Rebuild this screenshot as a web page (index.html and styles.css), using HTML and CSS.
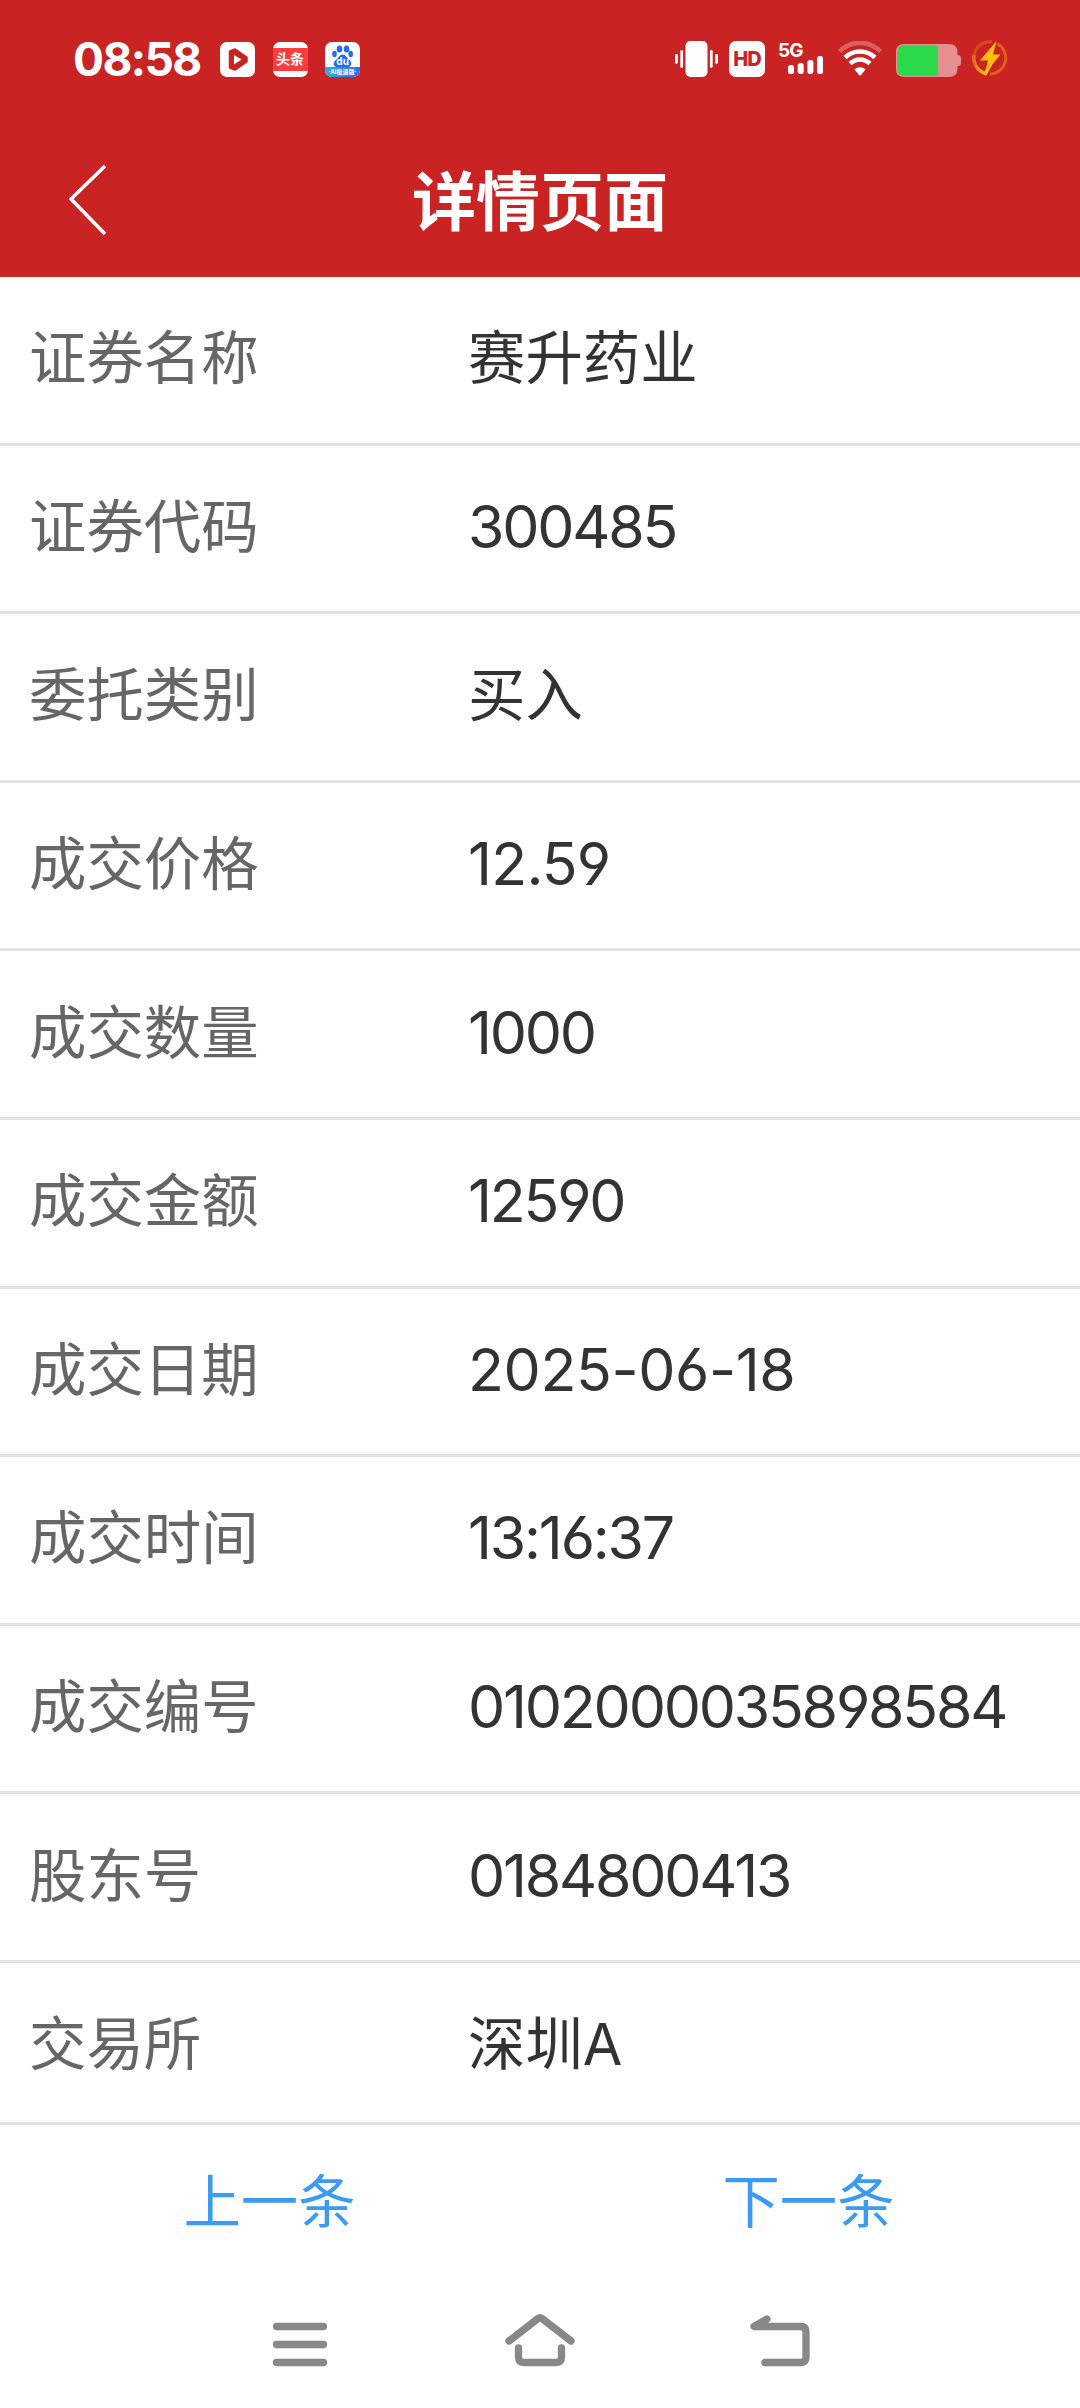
FILE: index.html
```html
<!DOCTYPE html>
<html lang="zh-CN">
<head>
  <meta charset="utf-8" />
  <meta name="viewport" content="width=device-width, initial-scale=1.0" />

  <title>详情页面</title>

  <link rel="stylesheet" href="styles.css">
</head>
<body>
  <header class="header">
    <div class="status-bar">
      <span class="clock">08:58</span>

      <div class="notifications">
        <svg class="status-icon" viewBox="0 0 35 35">
          <rect width="35" height="35" rx="7" fill="#fff" />
          <path d="M10 9.500 15 7.500 26.500 15.500V19.500L15 27.500 10 25.500Z" fill="#c92323" stroke="#c92323" stroke-width="2.500" stroke-linejoin="round" />
          <path d="M14 13 21.500 17.500 14 22.500Z" fill="#fff" />
        </svg>

        <div class="app-icon toutiao"><span class="toutiao-name">头条</span></div>

        <div class="app-icon baidu">
          <svg class="baidu-paw" viewBox="0 0 35 25">
            <g fill="#256df0">
              <ellipse cx="14.500" cy="7" rx="2.800" ry="3.600" />
              <ellipse cx="21.500" cy="7" rx="2.800" ry="3.600" />
              <ellipse cx="9.500" cy="12" rx="2.300" ry="3.200" />
              <ellipse cx="25.700" cy="12" rx="2.300" ry="3.200" />
              <path d="M17.500 12.500C20.500 12.500 22 16 25 18.300 28 22 25.500 26 21 25H14C9 26 7 22 10.500 18.300 13.500 16 14.500 12.500 17.500 12.500Z" />
            </g>
            <text class="baidu-du" x="17.600" y="22.700">du</text>
          </svg>
          <span class="baidu-label">·AI极速版·</span>
        </div>
      </div>

      <div class="indicators">
        <svg class="vibrate" viewBox="0 0 43 36">
          <g fill="#fff">
            <rect x="10.500" width="22" height="36" rx="5" />
            <rect x="5.300" y="9" width="2.800" height="18" rx="1.400" />
            <rect x="0" y="13" width="2.800" height="10" rx="1.400" />
            <rect x="34.900" y="9" width="2.800" height="18" rx="1.400" />
            <rect x="40.200" y="13" width="2.800" height="10" rx="1.400" />
          </g>
        </svg>

        <span class="hd">HD</span>

        <div class="signal">
          <span class="signal-type">5G</span>
          <svg class="signal-bars" viewBox="0 0 35 18">
            <g fill="#fff">
              <rect y="9" width="6" height="9" rx="2.500" />
              <rect x="9.700" y="7" width="6" height="11" rx="2.500" />
              <rect x="19.400" y="4" width="6" height="14" rx="2.500" />
              <rect x="29" width="6" height="18" rx="2.500" />
            </g>
          </svg>
        </div>

        <svg class="wifi" viewBox="0 0 44 36">
          <g fill="none" stroke="#fff" stroke-width="4.500">
            <path d="M1.500 10.500C13-1 31-1 42.500 10.500" opacity=".28" />
            <path d="M7 16.500C15.500 8.500 28.500 8.500 37 16.500" />
            <path d="M12 22.500C18 17 26 17 32 22.500" />
          </g>
          <path d="M16.500 28.500C19.500 25.500 24.500 25.500 27.500 28.500L23 34Q22 35 21 34Z" fill="#fff" />
        </svg>

        <svg class="battery" viewBox="0 0 65 33">
          <path d="M8 0H53Q61 0 61.500 8V11Q65 11 65 14V19Q65 22 61.500 22V25Q61 33 53 33H8Q0 33 0 25V8Q0 0 8 0Z" fill="#e68f8f" />
          <path d="M8 1.300H42V31.700H8Q1.300 31.700 1.300 25V8Q1.300 1.300 8 1.300Z" fill="#2bd94a" />
        </svg>

        <svg class="charge" viewBox="0 0 36 36">
          <defs>
            <linearGradient id="ring" x1="0" y1="0" x2="1" y2="0">
              <stop offset="0" stop-color="#e56b16" />
              <stop offset=".6" stop-color="#fdb913" />
            </linearGradient>
          </defs>
          <path d="M20 1.800A16.300 16.300 0 0 0 2 15" fill="none" stroke="#d9481c" stroke-width="3" />
          <path d="M2 15A16.300 16.300 0 0 0 13.500 33.500L19 23.500" fill="none" stroke="url(#ring)" stroke-width="3.500" />
          <path d="M25 3.500A16.300 16.300 0 0 1 18 34.200" fill="none" stroke="#df6019" stroke-width="3" />
          <path d="M24.500 1 8 20.500H16L12.500 34 28.500 14.500H21Z" fill="#ffbd12" />
        </svg>
      </div>
    </div>

    <div class="title-bar">
      <svg class="back" viewBox="0 0 38 72">
        <path d="M36 2 2 35 36 70" fill="none" stroke="#fff" stroke-width="3.600" />
      </svg>
      <h1 class="title">详情页面</h1>
    </div>
  </header>

  <main class="details">
    <div class="row"><span class="label">证券名称</span><span class="value">赛升药业</span></div>
    <div class="row"><span class="label">证券代码</span><span class="value number">300485</span></div>
    <div class="row"><span class="label">委托类别</span><span class="value">买入</span></div>
    <div class="row"><span class="label">成交价格</span><span class="value number price">12.59</span></div>
    <div class="row"><span class="label">成交数量</span><span class="value number">1000</span></div>
    <div class="row"><span class="label">成交金额</span><span class="value number">12590</span></div>
    <div class="row"><span class="label">成交日期</span><span class="value number date">2025-06-18</span></div>
    <div class="row"><span class="label">成交时间</span><span class="value number">13:16:37</span></div>
    <div class="row"><span class="label">成交编号</span><span class="value number">0102000035898584</span></div>
    <div class="row"><span class="label">股东号</span><span class="value number">0184800413</span></div>
    <div class="row"><span class="label">交易所</span><span class="value">深圳A</span></div>
  </main>

  <footer class="pager">
    <a class="pager-link">上一条</a>
    <a class="pager-link">下一条</a>
  </footer>

  <nav class="system-nav">
    <svg class="nav-icon" viewBox="0 0 72 54">
      <path d="M12.500 12.500H59.500M12.500 30.500H59.500M12.500 48.500H59.500" />
    </svg>
    <svg class="nav-icon" viewBox="0 0 72 54">
      <path d="M5 27 34 4.500Q36 3 38 4.500L67 27M14.500 34V43Q14.500 48.500 20 48.500H52Q57.500 48.500 57.500 43V34" />
    </svg>
    <svg class="nav-icon" viewBox="0 0 72 54">
      <path d="M23 5 10 12.500H56.500Q62 12.500 62 18V43Q62 48.500 56.500 48.500H21" />
    </svg>
  </nav>
</body>
</html>
```
FILE: styles.css
```css
*, *::before, *::after {
  box-sizing: border-box;
}

body {
  margin: 0;
  height: 2408px;
  display: flex;
  flex-direction: column;
  background: #fefefe;
  font-family: "Inter", "Noto Sans CJK SC", sans-serif;
  overflow: hidden;
}

svg {
  display: block;
  flex-shrink: 0;
}

.header {
  height: 277px;
  background-color: #c92323;
  color: white;
}

.status-bar {
  display: flex;
  align-items: center;
  height: 118px;
  padding: 0 72px 0 73px;
}

.clock {
  width: 147px;
  font-size: 46px;
  font-weight: 700;
  letter-spacing: -1.6px;
  white-space: nowrap;
}

.notifications {
  display: flex;
  gap: 17.5px;
}

.status-icon, .app-icon {
  width: 35px;
  height: 35px;
}

.app-icon {
  border-radius: 7px;
  overflow: hidden;
  background-color: white;
}

.toutiao {
  padding: 6px 0;
}

.toutiao-name {
  display: block;
  height: 23px;
  line-height: 22px;
  background-color: #fb3d3d;
  font-size: 14px;
  font-weight: 700;
  text-align: center;
}

.baidu-paw {
  width: 35px;
  height: 25px;
}

.baidu-du {
  font-size: 10px;
  font-weight: 700;
  text-anchor: middle;
  fill: white;
}

.baidu-label {
  display: block;
  height: 10px;
  line-height: 9px;
  background: linear-gradient(90deg, #28aeea, #2f6df0);
  font-size: 6px;
  font-weight: 700;
  text-align: center;
  white-space: nowrap;
}

.indicators {
  display: flex;
  align-items: center;
  margin-left: auto;
}

.vibrate {
  width: 43px;
  height: 36px;
}

.hd {
  width: 36px;
  height: 36px;
  margin-left: 11px;
  border-radius: 7px;
  background-color: white;
  color: #c92323;
  font-size: 20px;
  font-weight: 800;
  letter-spacing: -1px;
  line-height: 36px;
  text-align: center;
}

.signal {
  width: 46px;
  height: 32px;
  margin-left: 13px;
}

.signal-type {
  display: block;
  height: 13px;
  font-size: 19px;
  font-weight: 700;
  letter-spacing: -1px;
  line-height: 15px;
}

.signal-bars {
  width: 35px;
  height: 18px;
  margin-left: 10px;
}

.wifi {
  width: 44px;
  height: 36px;
  margin-left: 14px;
}

.battery {
  width: 65px;
  height: 33px;
  margin: 2px 0 0 14px;
}

.charge {
  width: 36px;
  height: 36px;
  margin: -2px 0 0 11px;
}

.title-bar {
  display: grid;
  grid-template-columns: 107px 1fr 107px;
  align-items: center;
  height: 164px;
}

.back {
  width: 38px;
  height: 72px;
  margin-left: 69px;
}

.title {
  margin: 3px 0 0;
  font-size: 64px;
  font-weight: 700;
  line-height: 90px;
  text-align: center;
}

.details {
  height: 1845px;
}

.row {
  display: grid;
  grid-template-columns: 439px 1fr;
  align-items: center;
  height: 168.6px;
  padding: 0 0 3px 29px;
  border-bottom: 3px solid #e3e3e3;
  font-size: 57.4px;
  line-height: 80px;
}

.row:last-child {
  height: 159px;
  padding: 4px 0 0 29px;
  border-bottom: none;
}

.label {
  color: #666;
}

.value {
  color: #333;
  white-space: nowrap;
}

.number {
  font-size: 59px;
  font-feature-settings: "cv03", "cv04";
  letter-spacing: -2.2px;
}

.price {
  letter-spacing: -0.8px;
}

.date {
  letter-spacing: -0.4px;
}

.pager {
  display: grid;
  grid-template-columns: 1fr 1fr;
  height: 158px;
  padding-right: 2px;
  border-top: 3px solid #e3e3e3;
  line-height: 154px;
  text-align: center;
}

.pager-link {
  color: #3c9af3;
  font-size: 57.4px;
}

.system-nav {
  display: flex;
  justify-content: center;
  gap: 168px;
  padding-top: 34px;
}

.nav-icon {
  width: 72px;
  height: 54px;
  fill: none;
  stroke: #888;
  stroke-width: 7.3px;
  stroke-linecap: round;
  stroke-linejoin: round;
}
```
